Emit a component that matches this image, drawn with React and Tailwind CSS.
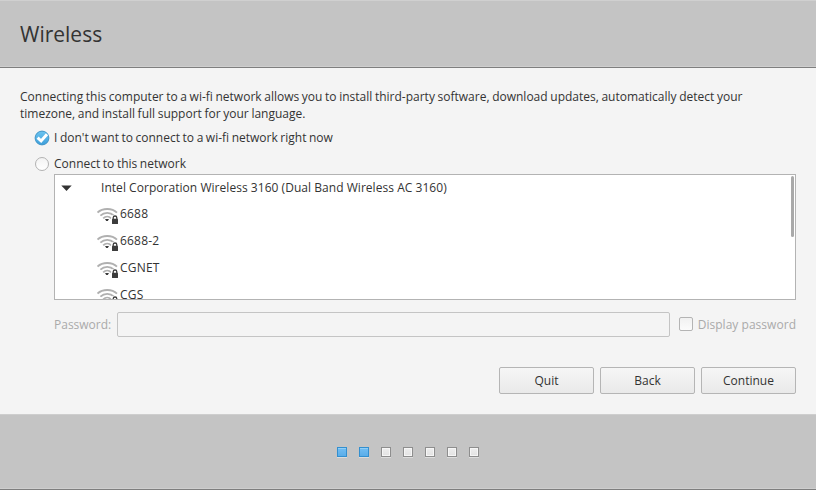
import React from "react";

const networks = ["6688", "6688-2", "CGNET", "CGS"];
const steps = [true, true, false, false, false, false, false];

function WifiIcon() {
  return (
    <svg width="22" height="18" viewBox="0 0 22 18" className="mt-[5px] shrink-0" fill="none">
      <g stroke="#b0b0b0" strokeWidth="1.8">
        <path d="M0.5 6.6 C5.5 1.8 15 1.8 20 6.6" />
        <path d="M3.4 9.7 C7.2 5.9 13.2 5.9 17 9.7" />
        <path d="M6.2 12.4 C8.6 10 11.8 10 14.2 12.4" />
      </g>
      <path d="M8 13.1 H12 L10.8 15 H9.2 Z" fill="#3c3c3c" />
      <path d="M14.3 12 V11 Q14.3 8.8 18 8.8 Q21.7 8.8 21.7 11 V18 H14.3 Z" fill="#fff" />
      <path d="M16.2 13 V11.8 A1.8 1.8 0 0 1 19.8 11.8 V13" stroke="#3c3c3c" strokeWidth="1.3" />
      <rect x="15" y="12.7" width="6" height="5.3" rx="0.5" fill="#3c3c3c" />
    </svg>
  );
}

function RadioOn() {
  return (
    <svg width="16" height="16" viewBox="0 0 16 16" className="shrink-0">
      <defs>
        <linearGradient id="radio" x1="0" y1="0" x2="0" y2="1">
          <stop offset="0" stopColor="#6cc4f0" />
          <stop offset="1" stopColor="#3e9fdb" />
        </linearGradient>
      </defs>
      <circle cx="8" cy="8" r="6.9" fill="url(#radio)" stroke="#4296c8" strokeWidth="1" />
      <path d="M3.6 7.6 L7.1 11 L13 4.2" fill="none" stroke="#fff" strokeWidth="2.9" />
    </svg>
  );
}

function Button({ children }) {
  return (
    <button className="h-[27px] w-[95px] rounded-[2px] border border-[#b5b5b5] bg-linear-to-b from-[#f6f6f6] to-[#e9e9e9] text-center leading-[25px]">
      {children}
    </button>
  );
}

export default function App() {
  return (
    <div className="flex h-[490px] w-[816px] flex-col overflow-hidden bg-[#f4f4f4] font-['Open_Sans','Noto_Sans',sans-serif] text-[12px] text-[#333]">
      <header className="flex h-[68px] shrink-0 items-center border-t border-b border-t-[#d0d0d0] border-b-[#7e7e7e] bg-[#c4c4c4] px-5 pt-[2px] text-[21px] shadow-[inset_0_-1px_#cecece]">
        <h1>Wireless</h1>
      </header>

      <main className="flex h-[346px] shrink-0 flex-col px-5 pt-5">
        <p className="h-[34px] leading-[17px] [word-spacing:-0.48px] whitespace-nowrap">
          Connecting this computer to a wi-fi network allows you to install third-party software, download updates, automatically detect your
          <br />
          timezone, and install full support for your language.
        </p>
        <label className="mt-[3px] flex h-[26px] items-center gap-[4px] pl-[14px] [word-spacing:-0.55px]">
          <RadioOn />
          <span>I don't want to connect to a wi-fi network right now</span>
        </label>
        <label className="flex h-[26px] items-center pl-[15px] [word-spacing:-0.55px]">
          <span className="mr-[5px] size-[14px] rounded-full border border-[#b2b2b2] bg-linear-to-b from-[#f3f3f3] to-white" />
          <span>Connect to this network</span>
        </label>

        <div className="ml-[34px] -mt-[3px] flex h-[126px] shrink-0 justify-between overflow-hidden border border-[#b3b3b3] bg-white">
          <div>
            <div className="flex h-[26px] items-center pl-[6px]">
              <svg width="11" height="6" viewBox="0 0 11 6">
                <path d="M0.3 0.4 H10.7 L5.5 6 Z" fill="#333" />
              </svg>
              <span className="ml-[29px] tracking-[0.04px]">Intel Corporation Wireless 3160 (Dual Band Wireless AC 3160)</span>
            </div>
            {networks.map((name) => (
              <div key={name} className="flex h-[27px] items-start gap-[1px] pl-[42px]">
                <WifiIcon />
                <span className="leading-[25px] tracking-[0.2px]">{name}</span>
              </div>
            ))}
          </div>
          <div className="mt-[1px] mr-[1px] h-[61px] w-[3px] rounded-full bg-[#a9a9a9]" />
        </div>

        <div className="mt-3 ml-[34px] flex h-[25px] shrink-0 items-center text-[#aaa]">
          <span className="w-[63px]">Password:</span>
          <input disabled className="h-[25px] w-[553px] rounded-[2px] border border-[#c4c4c4] bg-[#f4f4f4]" />
          <span className="mr-[5px] mb-px ml-[9px] size-[14px] rounded-[2px] border border-[#b4b4b4] bg-linear-to-b from-[#f1f1f1] to-[#fbfbfb]" />
          <span className="tracking-[0.03px] whitespace-nowrap">Display password</span>
        </div>

        <div className="mt-[30px] flex justify-end gap-[6px]">
          <Button>Quit</Button>
          <Button>Back</Button>
          <Button>Continue</Button>
        </div>
      </main>

      <footer className="flex h-[76px] shrink-0 justify-center gap-3 border-t border-b border-t-[#cecece] border-b-[#7e7e7e] bg-[#c4c4c4] pt-8 shadow-[inset_0_-1px_#cecece]">
        {steps.map((done, i) => (
          <span
            key={i}
            className={
              done
                ? "size-[10px] border border-[#338fcf] bg-linear-to-b from-[#72bdf2] to-[#5aade9] shadow-[0_1px_#dcdcdc,inset_0_1px_#91cef6]"
                : "size-[10px] border border-[#8e8e8e] bg-linear-to-b from-[#eeeeee] to-[#e2e2e2] shadow-[0_1px_#dcdcdc,inset_0_0_0_1px_#f6f6f6]"
            }
          />
        ))}
      </footer>
    </div>
  );
}
